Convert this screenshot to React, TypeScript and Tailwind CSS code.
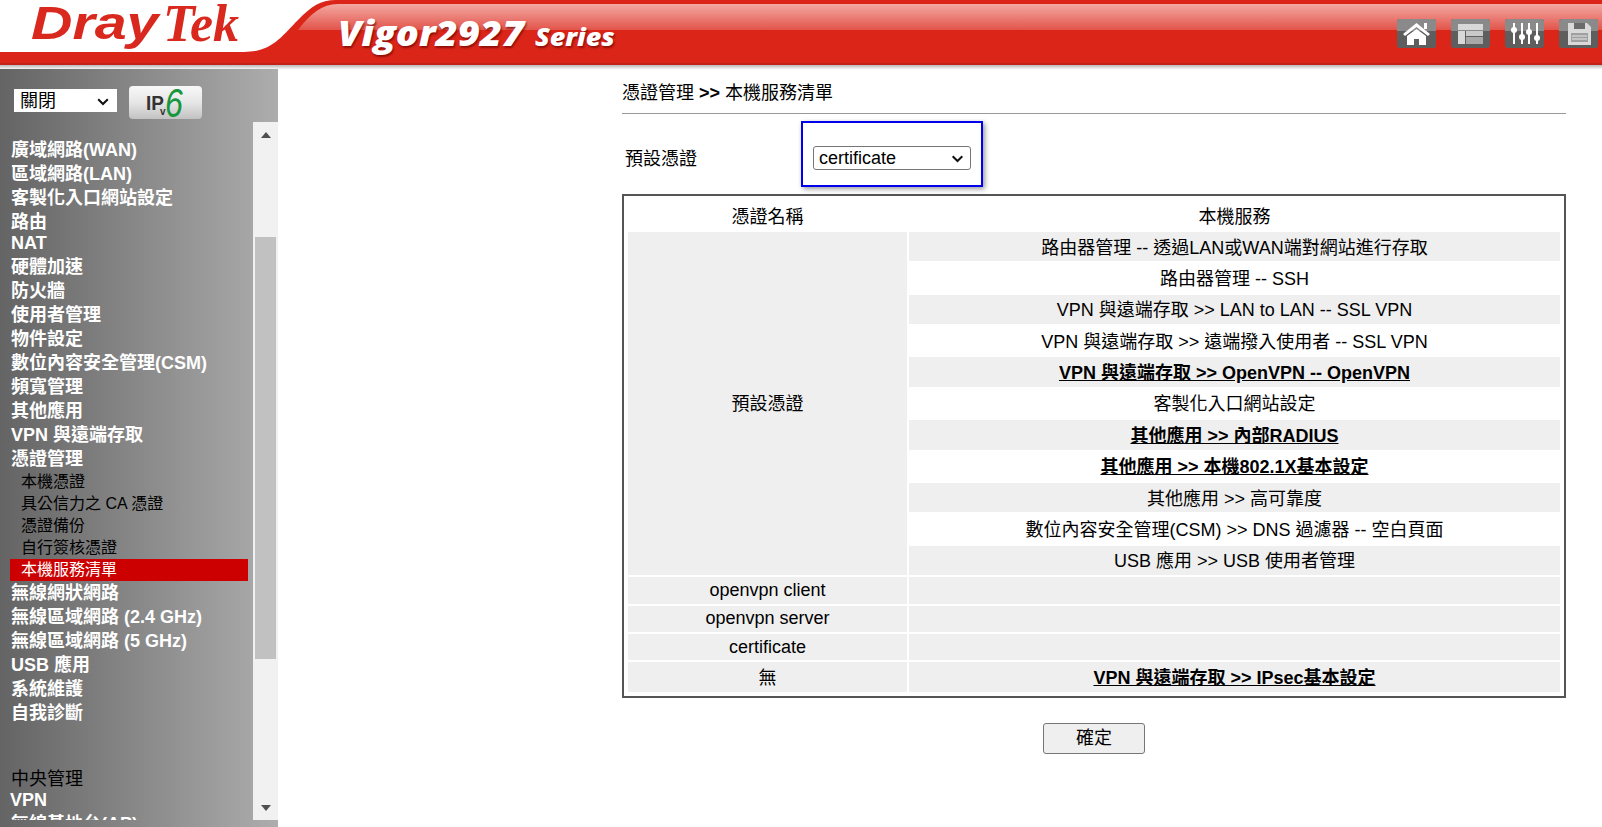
const MENU_TOP = [
  "廣域網路(WAN)",
  "區域網路(LAN)",
  "客製化入口網站設定",
  "路由",
];
const MENU_MID = [
  "硬體加速",
  "防火牆",
  "使用者管理",
  "物件設定",
  "數位內容安全管理(CSM)",
  "頻寬管理",
  "其他應用",
  "VPN 與遠端存取",
  "憑證管理",
];
const SUB_MENU = ["本機憑證", "具公信力之 CA 憑證", "憑證備份", "自行簽核憑證"];
const MENU_LOW = [
  "無線網狀網路",
  "無線區域網路 (2.4 GHz)",
  "無線區域網路 (5 GHz)",
  "USB 應用",
  "系統維護",
  "自我診斷",
];

const SERVICES = [
  { text: "路由器管理 -- 透過LAN或WAN端對網站進行存取" },
  { text: "路由器管理 -- SSH" },
  { text: "VPN 與遠端存取 >> LAN to LAN -- SSL VPN" },
  { text: "VPN 與遠端存取 >> 遠端撥入使用者 -- SSL VPN" },
  { text: "VPN 與遠端存取 >> OpenVPN -- OpenVPN", link: true },
  { text: "客製化入口網站設定" },
  { text: "其他應用 >> 內部RADIUS", link: true },
  { text: "其他應用 >> 本機802.1X基本設定", link: true },
  { text: "其他應用 >> 高可靠度" },
  { text: "數位內容安全管理(CSM) >> DNS 過濾器 -- 空白頁面" },
  { text: "USB 應用 >> USB 使用者管理" },
];

function MenuItem({ label }: { label: string }) {
  return <div className="h-6 pl-[11px] text-[18px] leading-6 font-bold text-white whitespace-nowrap">{label}</div>;
}

function Chevron({ className }: { className: string }) {
  return (
    <svg viewBox="0 0 12 8" className={`absolute pointer-events-none ${className}`}>
      <path d="M1.2 1.2 L6 6 L10.8 1.2" fill="none" stroke="#111" strokeWidth="2" />
    </svg>
  );
}

function ToolButton({ children }: { children: React.ReactNode }) {
  return (
    <div className="relative w-[39px] h-[29px] rounded-[3px] bg-[#5e5e5e] overflow-hidden flex items-center justify-center">
      <div className="absolute inset-x-0 top-0 h-[12px] bg-[#8a8a8a]" />
      <svg viewBox="0 0 39 29" className="relative w-[39px] h-[29px]">{children}</svg>
    </div>
  );
}

function Banner() {
  return (
    <div className="relative h-[69px] bg-white overflow-hidden shrink-0">
      <svg className="absolute inset-0" width="1602" height="69" viewBox="0 0 1602 69" preserveAspectRatio="none">
        <defs>
          <linearGradient id="gloss" x1="0" y1="0" x2="0" y2="1">
            <stop offset="0" stopColor="#f3a9a3" />
            <stop offset="1" stopColor="#e2544a" />
          </linearGradient>
          <linearGradient id="base" x1="0" y1="0" x2="0" y2="1">
            <stop offset="0" stopColor="#b9b9b9" />
            <stop offset="1" stopColor="#f4f4f4" />
          </linearGradient>
        </defs>
        <path d="M0 52 H244 C272 52 282 36 298 20 C312 6 320 0 336 0 H1602 V65 H0 Z" fill="#dc2519" />
        <path d="M298 30 C310 14 322 4 338 4 H1602 V30 Z" fill="url(#gloss)" />
        <rect x="0" y="63" width="1602" height="2" fill="#c4211a" />
        <rect x="0" y="65" width="1602" height="4" fill="url(#base)" />
      </svg>
      <div className="absolute left-[31px] top-0 origin-left scale-x-[1.22] whitespace-nowrap text-[#d9281e] text-[47px] leading-[46px] italic font-bold font-['Liberation_Sans',sans-serif]">
        Dray
      </div>
      <div className="absolute left-[163px] top-0 whitespace-nowrap text-[#d9281e] text-[52px] leading-[48px] italic font-bold font-['Liberation_Serif',serif]">
        Tek
      </div>
      <div className="absolute left-[338px] top-[12px] origin-left scale-x-[1.09] whitespace-nowrap text-white font-extrabold italic text-[35px] leading-[42px] font-['Open_Sans',sans-serif] [text-shadow:1px_2px_2px_rgba(90,0,0,0.6)]">
        Vigor2927
      </div>
      <div className="absolute left-[535px] top-[23px] origin-left scale-x-[1.12] whitespace-nowrap text-white font-extrabold italic text-[24px] leading-[28px] font-['Open_Sans',sans-serif] [text-shadow:1px_2px_2px_rgba(90,0,0,0.6)]">
        Series
      </div>
      <div className="absolute left-[1397px] top-[19px] flex gap-[15px]">
        <ToolButton>
          <path d="M6 15 L19.5 4 L33 15 L31 17 L19.5 8 L8 17 Z" fill="#fff" />
          <path d="M10 17 L19.5 10 L29 17 V26 H22 V20 H17 V26 H10 Z" fill="#fff" />
          <rect x="27" y="4" width="3" height="6" fill="#fff" />
        </ToolButton>
        <ToolButton>
          <rect x="7" y="5" width="25" height="6" fill="#d8d8d8" />
          <rect x="7" y="12" width="7" height="13" fill="#d8d8d8" />
          <rect x="15" y="12" width="17" height="5" fill="#c9c9c9" />
          <rect x="15" y="18" width="17" height="7" fill="#a8a8a8" />
        </ToolButton>
        <ToolButton>
          <g stroke="#fff" strokeWidth="2">
            <path d="M9 4 V25 M17 4 V25 M24 4 V25 M32 4 V25" />
          </g>
          <g fill="#fff">
            <circle cx="9" cy="11" r="3" />
            <circle cx="17" cy="18" r="3" />
            <circle cx="24" cy="13" r="3" />
            <circle cx="32" cy="19" r="3" />
          </g>
        </ToolButton>
        <ToolButton>
          <path d="M9 4 H28 L32 8 V26 H9 Z" fill="#d9d9d9" />
          <rect x="15" y="4" width="11" height="6" fill="#6b6b6b" />
          <rect x="12" y="14" width="17" height="9" fill="#a0a0a0" />
          <path d="M13 17 H28 M13 20 H28" stroke="#e6e6e6" strokeWidth="1" />
        </ToolButton>
      </div>
    </div>
  );
}

function Sidebar() {
  return (
    <aside className="w-[278px] shrink-0 flex flex-col bg-[linear-gradient(90deg,#646464,#adadad)]">
      <div className="h-[53px] flex items-start pl-[14px] pt-[17px] shrink-0">
        <div className="relative w-[103px] h-[23px] mt-[3px]">
          <select className="w-full h-full appearance-none bg-white text-[18px] leading-[22px] text-black pl-[6px]">
            <option>關閉</option>
          </select>
          <Chevron className="right-[8px] top-[9px] w-[12px] h-[8px]" />
        </div>
        <div className="relative ml-[12px] w-[73px] h-[33px] rounded-[4px] bg-[linear-gradient(180deg,#f8f8f8,#e6e6e6_50%,#c2c2c2)] font-['Liberation_Sans',sans-serif]">
          <span className="absolute left-[17px] top-[5px] text-[21px] leading-[24px] text-[#333] font-bold origin-left scale-x-[0.9]">IP</span>
          <span className="absolute left-[31px] top-[20px] text-[10px] leading-[12px] font-bold text-[#333]">v</span>
          <span className="absolute left-[36px] top-0 text-[40px] leading-[34px] italic text-[#17963c] origin-left scale-x-[0.8]">6</span>
        </div>
      </div>
      <div className="flex-1 min-h-0 flex items-stretch">
        <nav className="w-[253px] h-[698px] overflow-hidden pt-4">
          {MENU_TOP.map((m) => <MenuItem key={m} label={m} />)}
          <div className="h-[21px] pl-[11px] text-[18px] leading-[18px] font-bold text-white">NAT</div>
          {MENU_MID.map((m) => <MenuItem key={m} label={m} />)}
          {SUB_MENU.map((m) => (
            <div key={m} className="h-[22px] pl-[21px] text-[16px] leading-[22px] text-black whitespace-nowrap">{m}</div>
          ))}
          <div className="h-[22px] ml-[10px] mr-[5px] pl-[11px] bg-[#cc0000] text-[16px] leading-[22px] text-white whitespace-nowrap">本機服務清單</div>
          {MENU_LOW.map((m) => <MenuItem key={m} label={m} />)}
          <div className="h-[42px]" />
          <div className="h-6 pl-[11px] text-[18px] leading-6 text-black">中央管理</div>
          <div className="h-[21px] pl-[10px] text-[18px] leading-[18px] font-bold text-white">VPN</div>
          <MenuItem label="無線基地台(AP)" />
        </nav>
        <div className="w-[25px] h-[698px] bg-[#f1f1f1] flex flex-col items-center">
          <div className="h-[115px] w-full flex justify-center pt-[10px] shrink-0">
            <div className="w-0 h-0 border-x-[5px] border-x-transparent border-b-[6px] border-b-[#505050]" />
          </div>
          <div className="w-[21px] h-[422px] bg-[#c1c1c1] shrink-0" />
          <div className="flex-1 w-full flex items-end justify-center pb-[9px]">
            <div className="w-0 h-0 border-x-[5px] border-x-transparent border-t-[6px] border-t-[#505050]" />
          </div>
        </div>
      </div>
    </aside>
  );
}

function ServiceTable() {
  const cell = "p-0 text-center align-middle";
  return (
    <div className="border-2 border-[#555] p-[2px] mt-[7px]">
      <table className="w-full border-separate border-spacing-[2px] table-fixed">
        <colgroup>
          <col className="w-[279px]" />
          <col />
        </colgroup>
        <tbody>
          <tr className="h-[30px]">
            <td className={`${cell} pt-[4px]`}>憑證名稱</td>
            <td className={`${cell} pt-[4px]`}>本機服務</td>
          </tr>
          {SERVICES.map((s, i) => (
            <tr key={s.text} className="h-[29.36px]">
              {i === 0 && (
                <td rowSpan={SERVICES.length} className={`${cell} pt-[2px] bg-[#efefef]`}>預設憑證</td>
              )}
              <td className={`${cell} pt-[2px] ${i % 2 === 0 ? "bg-[#efefef]" : "bg-white"}`}>
                {s.link ? <span className="font-bold underline">{s.text}</span> : s.text}
              </td>
            </tr>
          ))}
          <tr className="h-[27px]">
            <td className={`${cell} bg-[#efefef]`}>openvpn client</td>
            <td className={`${cell} bg-[#efefef]`} />
          </tr>
          <tr className="h-[26px]">
            <td className={`${cell} pb-[2px] bg-[#efefef]`}>openvpn server</td>
            <td className={`${cell} bg-[#efefef]`} />
          </tr>
          <tr className="h-[26px]">
            <td className={`${cell} bg-[#efefef]`}>certificate</td>
            <td className={`${cell} bg-[#efefef]`} />
          </tr>
          <tr className="h-[30px]">
            <td className={`${cell} pt-[2px] bg-[#efefef]`}>無</td>
            <td className={`${cell} pt-[2px] bg-[#efefef]`}>
              <span className="font-bold underline">VPN 與遠端存取 &gt;&gt; IPsec基本設定</span>
            </td>
          </tr>
        </tbody>
      </table>
    </div>
  );
}

export default function App() {
  return (
    <div className="h-[827px] w-[1602px] overflow-hidden flex flex-col bg-white text-black text-[18px] leading-[22px] font-['Liberation_Sans','Noto_Sans_CJK_TC',sans-serif]">
      <Banner />
      <div className="flex flex-1 min-h-0">
        <Sidebar />
        <main className="w-[944px] ml-[344px]">
          <div className="h-[45px] border-b border-[#999] pt-[13px]">
            憑證管理 <b>&gt;&gt;</b> 本機服務清單
          </div>
          <div className="flex items-start mt-[7px]">
            <div className="w-[179px] pl-[3px] pt-[27px]">預設憑證</div>
            <div className="w-[182px] h-[66px] border-2 border-[#0000ee] shadow-[2px_2px_5px_rgba(0,0,0,0.4)] pt-[23px] pl-[10px]">
              <div className="relative w-[158px] h-[24px]">
                <select className="w-full h-full appearance-none text-[18px] leading-[22px] bg-white border border-[#767676] rounded-[3px] pl-[5px]">
                  <option>certificate</option>
                </select>
                <Chevron className="right-[7px] top-[9px] w-[13px] h-[8px]" />
              </div>
            </div>
          </div>
          <ServiceTable />
          <div className="flex justify-center mt-[25px]">
            <button className="w-[102px] h-[31px] bg-[#efefef] border border-[#767676] rounded-[3px] text-[18px]">確定</button>
          </div>
        </main>
      </div>
    </div>
  );
}
